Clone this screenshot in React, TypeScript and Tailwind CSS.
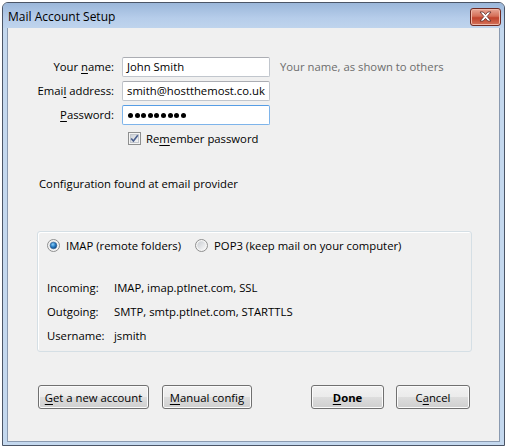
function Checkbox() {
  return (
    <svg width="13" height="13" viewBox="0 0 13 13">
      <defs>
        <linearGradient id="cbg" x1="0" y1="0" x2="1" y2="1">
          <stop offset="0" stopColor="#cbcfd5" />
          <stop offset="1" stopColor="#f7f7f7" />
        </linearGradient>
      </defs>
      <rect x="0.5" y="0.5" width="12" height="12" fill="#f4f4f4" stroke="#8e8f8f" />
      <rect x="2.5" y="2.5" width="8" height="8" fill="url(#cbg)" stroke="#c3c7cd" />
      <path d="M3.2 6.4 L5.4 9 L9.8 3.2" fill="none" stroke="#4a5f8e" strokeWidth="1.6" />
    </svg>
  );
}

function Radio({ on }: { on?: boolean }) {
  return (
    <svg width="13" height="13" viewBox="0 0 13 13">
      <defs>
        <linearGradient id="rbg" x1="0" y1="0" x2="1" y2="1">
          <stop offset="0" stopColor="#c9cdd2" />
          <stop offset="1" stopColor="#f8f8f8" />
        </linearGradient>
        <radialGradient id="rdot" cx="0.4" cy="0.35" r="0.7">
          <stop offset="0" stopColor="#8ed0f8" />
          <stop offset="0.5" stopColor="#2a80c8" />
          <stop offset="1" stopColor="#0b3f79" />
        </radialGradient>
      </defs>
      <circle cx="6.5" cy="6.5" r="6" fill="#f4f4f4" stroke="#8e8f8f" />
      <circle cx="6.5" cy="6.5" r="4.2" fill="url(#rbg)" />
      {on && <circle cx="6.5" cy="6.5" r="3.3" fill="url(#rdot)" stroke="#2d5e92" strokeWidth="0.6" />}
    </svg>
  );
}

function Btn({ children, w, bold }: { children: React.ReactNode; w: string; bold?: boolean }) {
  return (
    <div
      className={`${w} h-[24px] flex items-center justify-center rounded-[3px] border border-[#707070] bg-[linear-gradient(#f2f2f2_0%,#ebebeb_50%,#dddddd_51%,#cfcfcf_100%)] shadow-[inset_0_0_0_1px_#fbfbfb] ${bold ? "font-bold" : ""}`}
    >
      {children}
    </div>
  );
}

const inputCls =
  "h-[20px] flex items-center pl-[4px] bg-white border rounded-[2px] whitespace-nowrap overflow-hidden";

export default function App() {
  return (
    <div className="w-[507px] h-[446px] bg-white pt-[2px] pl-[2px] font-['Open_Sans',sans-serif] text-[11.3px] text-black leading-none">
      <div className="w-[503px] h-[444px] flex flex-col border border-[#4b5566] rounded-t-[6px] bg-[#c4d8ee] overflow-hidden">
        {/* title bar */}
        <div className="h-[25px] shrink-0 flex items-center justify-between pl-[5px] pr-[3px] bg-[linear-gradient(#9bb7da,#b6cdea_60%,#bfd4ed)]">
          <span className="text-[12px] pt-[2px]">Mail Account Setup</span>
          <div className="w-[31px] h-[18px] mt-[2px] flex items-center justify-center rounded-[3px] border border-[#6f2a22] bg-[linear-gradient(#e8a796_0%,#d56f58_45%,#c0432c_55%,#d4735b_100%)] shadow-[inset_0_0_0_1px_#f0b8a8]">
            <svg width="13" height="11" viewBox="0 0 13 11">
              <path
                d="M1 1 H4.2 L6.5 3.6 L8.8 1 H12 L8.1 5.5 L12 10 H8.8 L6.5 7.4 L4.2 10 H1 L4.9 5.5 Z"
                fill="#ffffff"
                stroke="#5a2a26"
                strokeWidth="0.8"
                strokeLinejoin="round"
              />
            </svg>
          </div>
        </div>

        {/* client area */}
        <div className="flex-1 px-[4px] pb-[3px]">
          <div className="h-full border border-[#8a9ab0] border-t-0 bg-[#f0f0f0] pl-[1px] flex flex-col">
            {/* account fields */}
            <div className="mt-[29px] grid grid-cols-[105px_148px_1fr] gap-x-[8px] gap-y-[4px] items-center">
              <span className="text-right">
                Your <u className="underline-offset-2">n</u>ame:
              </span>
              <div className={`${inputCls} border-[#c1c6cd] border-t-[#abadb3]`}>John Smith</div>
              <span className="ml-[2px] text-[#6d6d6d]">Your name, as shown to others</span>

              <span className="text-right">
                Emai<u className="underline-offset-2">l</u> address:
              </span>
              <div className={`${inputCls} border-[#c1c6cd] border-t-[#abadb3]`}>smith@hostthemost.co.uk</div>
              <span />

              <span className="text-right">
                <u className="underline-offset-2">P</u>assword:
              </span>
              <div className={`${inputCls} border-[#7eb4ea] border-t-[#569de5]`}>
                <div className="flex gap-[1.6px] pl-[1px]">
                  {Array.from({ length: 9 }).map((_, i) => (
                    <span key={i} className="w-[5px] h-[5px] rounded-full bg-black" />
                  ))}
                </div>
              </div>
              <span />
            </div>

            <div className="mt-[7px] ml-[119px] flex items-center gap-[5px]">
              <Checkbox />
              <span>
                Re<u className="underline-offset-2">m</u>ember password
              </span>
            </div>

            <div className="mt-[33px] ml-[30px]">Configuration found at email provider</div>

            {/* server settings group */}
            <div className="mt-[42px] ml-[28px] w-[435px] h-[121px] border border-[#d5dfe5] rounded-[3px] shadow-[inset_1px_1px_0_#ffffff] pl-[9px] flex flex-col">
              <div className="mt-[7px] flex items-center">
                <Radio on />
                <span className="ml-[6px]">IMAP (remote folders)</span>
                <span className="ml-[14px]">
                  <Radio />
                </span>
                <span className="ml-[6px]">POP3 (keep mail on your computer)</span>
              </div>
              <div className="mt-[23px] grid grid-cols-[67px_1fr] auto-rows-[24px] items-center">
                <span>Incoming:</span>
                <span>IMAP, imap.ptlnet.com, SSL</span>
                <span>Outgoing:</span>
                <span>SMTP, smtp.ptlnet.com, STARTTLS</span>
                <span>Username:</span>
                <span>jsmith</span>
              </div>
            </div>

            {/* buttons */}
            <div className="mt-[33px] ml-[29px] flex items-center">
              <Btn w="w-[111px]">
                <span>
                  <u className="underline-offset-2">G</u>et a new account
                </span>
              </Btn>
              <div className="ml-[13px]">
                <Btn w="w-[90px]">
                  <span>
                    <u className="underline-offset-2">M</u>anual config
                  </span>
                </Btn>
              </div>
              <div className="ml-[59px]">
                <Btn w="w-[73px]" bold>
                  <span>
                    <u className="underline-offset-2">D</u>one
                  </span>
                </Btn>
              </div>
              <div className="ml-[12px]">
                <Btn w="w-[74px]">
                  <span>
                    C<u className="underline-offset-2">a</u>ncel
                  </span>
                </Btn>
              </div>
            </div>
          </div>
        </div>
      </div>
    </div>
  );
}
